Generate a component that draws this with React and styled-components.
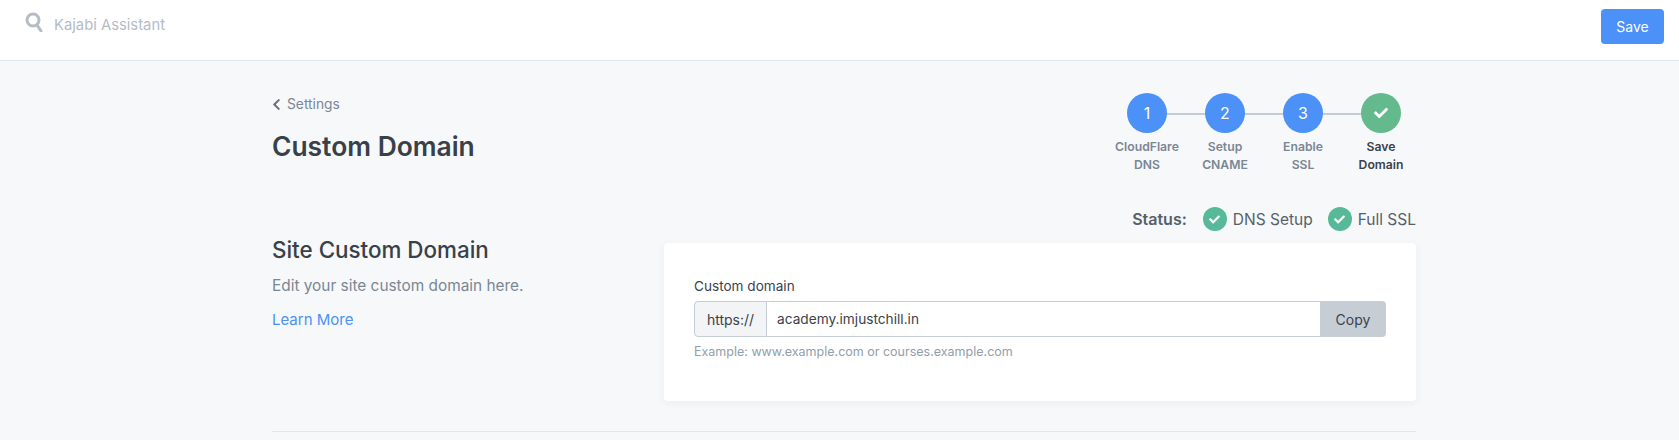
import styled, { createGlobalStyle } from "styled-components";
import { FaCheck, FaChevronLeft } from "react-icons/fa";

const GlobalStyle = createGlobalStyle`
html, body {
  margin: 0;
  padding: 0;
  background-color: #f7f8fa;
  font-family: Inter, "Liberation Sans", sans-serif;
  overflow: hidden;
}
* {
  box-sizing: border-box;
}
`

// ------- TOP BAR ---------
const TopBar = styled.header`
display: flex;
justify-content: space-between;
align-items: flex-start;
height: 61px;
padding: 9px 15px 0 25px;
background-color: #fff;
border-bottom: 1px solid #e3e6ea;
`
const Search = styled.div`
display: flex;
align-items: center;
gap: 11px;
height: 32px;
color: #b4bcc6;
font-size: 14.8px;

svg {
  width: 18px;
  height: 20px;
  margin-top: -7px;
}
`
const SaveButton = styled.button`
width: 63px;
height: 35px;
border: 0;
border-radius: 4px;
background-color: #4b91f7;
color: #fff;
font-family: inherit;
font-size: 14px;
`

// ------- PAGE ---------
const Main = styled.main`
width: 1144px;
margin-left: 272px;
padding-top: 32px;
`
const PageHead = styled.div`
display: flex;
justify-content: space-between;
align-items: flex-start;
`
const BackLink = styled.a`
display: flex;
align-items: center;
gap: 6px;
height: 20px;
margin-top: 1px;
color: #7a8794;
font-size: 13.8px;

svg {
  width: 9px;
  height: 13px;
  color: #68737f;
}
`
const Title = styled.h1`
margin: 14px 0 0;
color: #38414a;
font-size: 26.4px;
line-height: 36px;
font-weight: 600;
`

// ------- STEPPER ---------
const Stepper = styled.ol`
display: flex;
gap: 8px;
margin: 0;
padding: 0;
list-style: none;
`
const Step = styled.li`
position: relative;
width: 70px;
display: flex;
flex-direction: column;
align-items: center;

&:not(:last-child)::after {
  content: "";
  position: absolute;
  top: 20px;
  left: 50%;
  width: 78px;
  height: 2px;
  background-color: #c4cdd5;
}
`
const StepCircle = styled.div`
position: relative;
z-index: 1;
display: flex;
align-items: center;
justify-content: center;
width: 40px;
height: 40px;
border-radius: 50%;
background-color: ${(props) => (props.$done ? "#64ba8d" : "#4b91f7")};
color: #fff;
font-size: 16px;

svg {
  width: 14px;
  height: 14px;
}
`
const StepLabel = styled.div`
margin-top: 5px;
text-align: center;
color: ${(props) => (props.$done ? "#3a424b" : "#7a8794")};
font-size: 12.2px;
line-height: 18px;
font-weight: 600;
white-space: nowrap;
`

// ------- STATUS ---------
const StatusRow = styled.div`
display: flex;
justify-content: flex-end;
align-items: center;
height: 24px;
margin-top: 33px;
color: #56606b;
font-size: 15.5px;
`
const StatusLabel = styled.span`
margin-right: 16px;
font-weight: 600;
font-size: 16px;
`
const StatusItem = styled.span`
display: flex;
align-items: center;
gap: 6px;

& + & {
  margin-left: 15px;
}
`
const StatusDot = styled.span`
display: flex;
align-items: center;
justify-content: center;
width: 24px;
height: 24px;
border-radius: 50%;
background-color: #57b997;
color: #fff;

svg {
  width: 11px;
  height: 11px;
}
`

// ------- SECTION ---------
const Section = styled.section`
display: grid;
grid-template-columns: 392px 752px;
margin-top: 3px;
padding-bottom: 30px;
border-bottom: 1px solid #e3e6ea;
`
const SectionTitle = styled.h2`
margin: 0;
color: #38414a;
font-size: 22.4px;
line-height: 32px;
font-weight: 500;
`
const SectionText = styled.p`
margin: 8px 0 0;
color: #7a8794;
font-size: 15.4px;
line-height: 24px;
`
const LearnMore = styled.a`
display: block;
margin-top: 10px;
color: #4b91f7;
font-size: 15px;
line-height: 24px;
`
const Card = styled.div`
margin-top: 9px;
height: 158px;
padding: 33px 30px 0;
background-color: #fff;
border-radius: 4px;
box-shadow: 0 2px 8px rgba(50, 60, 70, 0.06);
`
const FieldLabel = styled.label`
display: block;
margin-bottom: 5px;
color: #3a424b;
font-size: 13.6px;
line-height: 20px;
`
const InputGroup = styled.div`
display: flex;
height: 36px;
`
const Prefix = styled.div`
display: flex;
align-items: center;
justify-content: center;
width: 73px;
background-color: #f3f4f6;
border: 1px solid #c4cdd5;
border-radius: 4px 0 0 4px;
color: #3a424b;
font-size: 14px;
`
const DomainInput = styled.input`
flex: 1;
min-width: 0;
padding: 0 10px;
border: 1px solid #c4cdd5;
border-left: 0;
border-right: 0;
color: #3a424b;
font-family: inherit;
font-size: 13.7px;
outline: none;
`
const CopyButton = styled.button`
width: 66px;
border: 0;
border-radius: 0 4px 4px 0;
background-color: #c6cdd5;
color: #3a424b;
font-family: inherit;
font-size: 14px;
`
const HelpText = styled.div`
margin-top: 6px;
color: #919eab;
font-size: 12.5px;
line-height: 18px;
`

const steps = [
  { id: 1, label: ["CloudFlare", "DNS"] },
  { id: 2, label: ["Setup", "CNAME"] },
  { id: 3, label: ["Enable", "SSL"] },
  { id: 4, label: ["Save", "Domain"], done: true },
];

function SearchIcon() {
  return (
    <svg viewBox="0 0 18 20" fill="none" stroke="currentColor" strokeWidth="3">
      <circle cx="8" cy="8" r="6" />
      <path d="M12 13l4 6" strokeLinecap="round" />
    </svg>
  );
}

function App() {
  return (
    <>
      <GlobalStyle />
      <TopBar>
        <Search>
          <SearchIcon />
          Kajabi Assistant
        </Search>
        <SaveButton>Save</SaveButton>
      </TopBar>
      <Main>
        <PageHead>
          <div>
            <BackLink>
              <FaChevronLeft />
              Settings
            </BackLink>
            <Title>Custom Domain</Title>
          </div>
          <Stepper>
            {steps.map((step) => (
              <Step key={step.id}>
                <StepCircle $done={step.done}>
                  {step.done ? <FaCheck /> : step.id}
                </StepCircle>
                <StepLabel $done={step.done}>
                  {step.label[0]}
                  <br />
                  {step.label[1]}
                </StepLabel>
              </Step>
            ))}
          </Stepper>
        </PageHead>
        <StatusRow>
          <StatusLabel>Status:</StatusLabel>
          <StatusItem>
            <StatusDot><FaCheck /></StatusDot>
            DNS Setup
          </StatusItem>
          <StatusItem>
            <StatusDot><FaCheck /></StatusDot>
            Full SSL
          </StatusItem>
        </StatusRow>
        <Section>
          <div>
            <SectionTitle>Site Custom Domain</SectionTitle>
            <SectionText>Edit your site custom domain here.</SectionText>
            <LearnMore>Learn More</LearnMore>
          </div>
          <Card>
            <FieldLabel>Custom domain</FieldLabel>
            <InputGroup>
              <Prefix>https://</Prefix>
              <DomainInput readOnly value="academy.imjustchill.in" />
              <CopyButton>Copy</CopyButton>
            </InputGroup>
            <HelpText>Example: www.example.com or courses.example.com</HelpText>
          </Card>
        </Section>
      </Main>
    </>
  );
}

export default App;
